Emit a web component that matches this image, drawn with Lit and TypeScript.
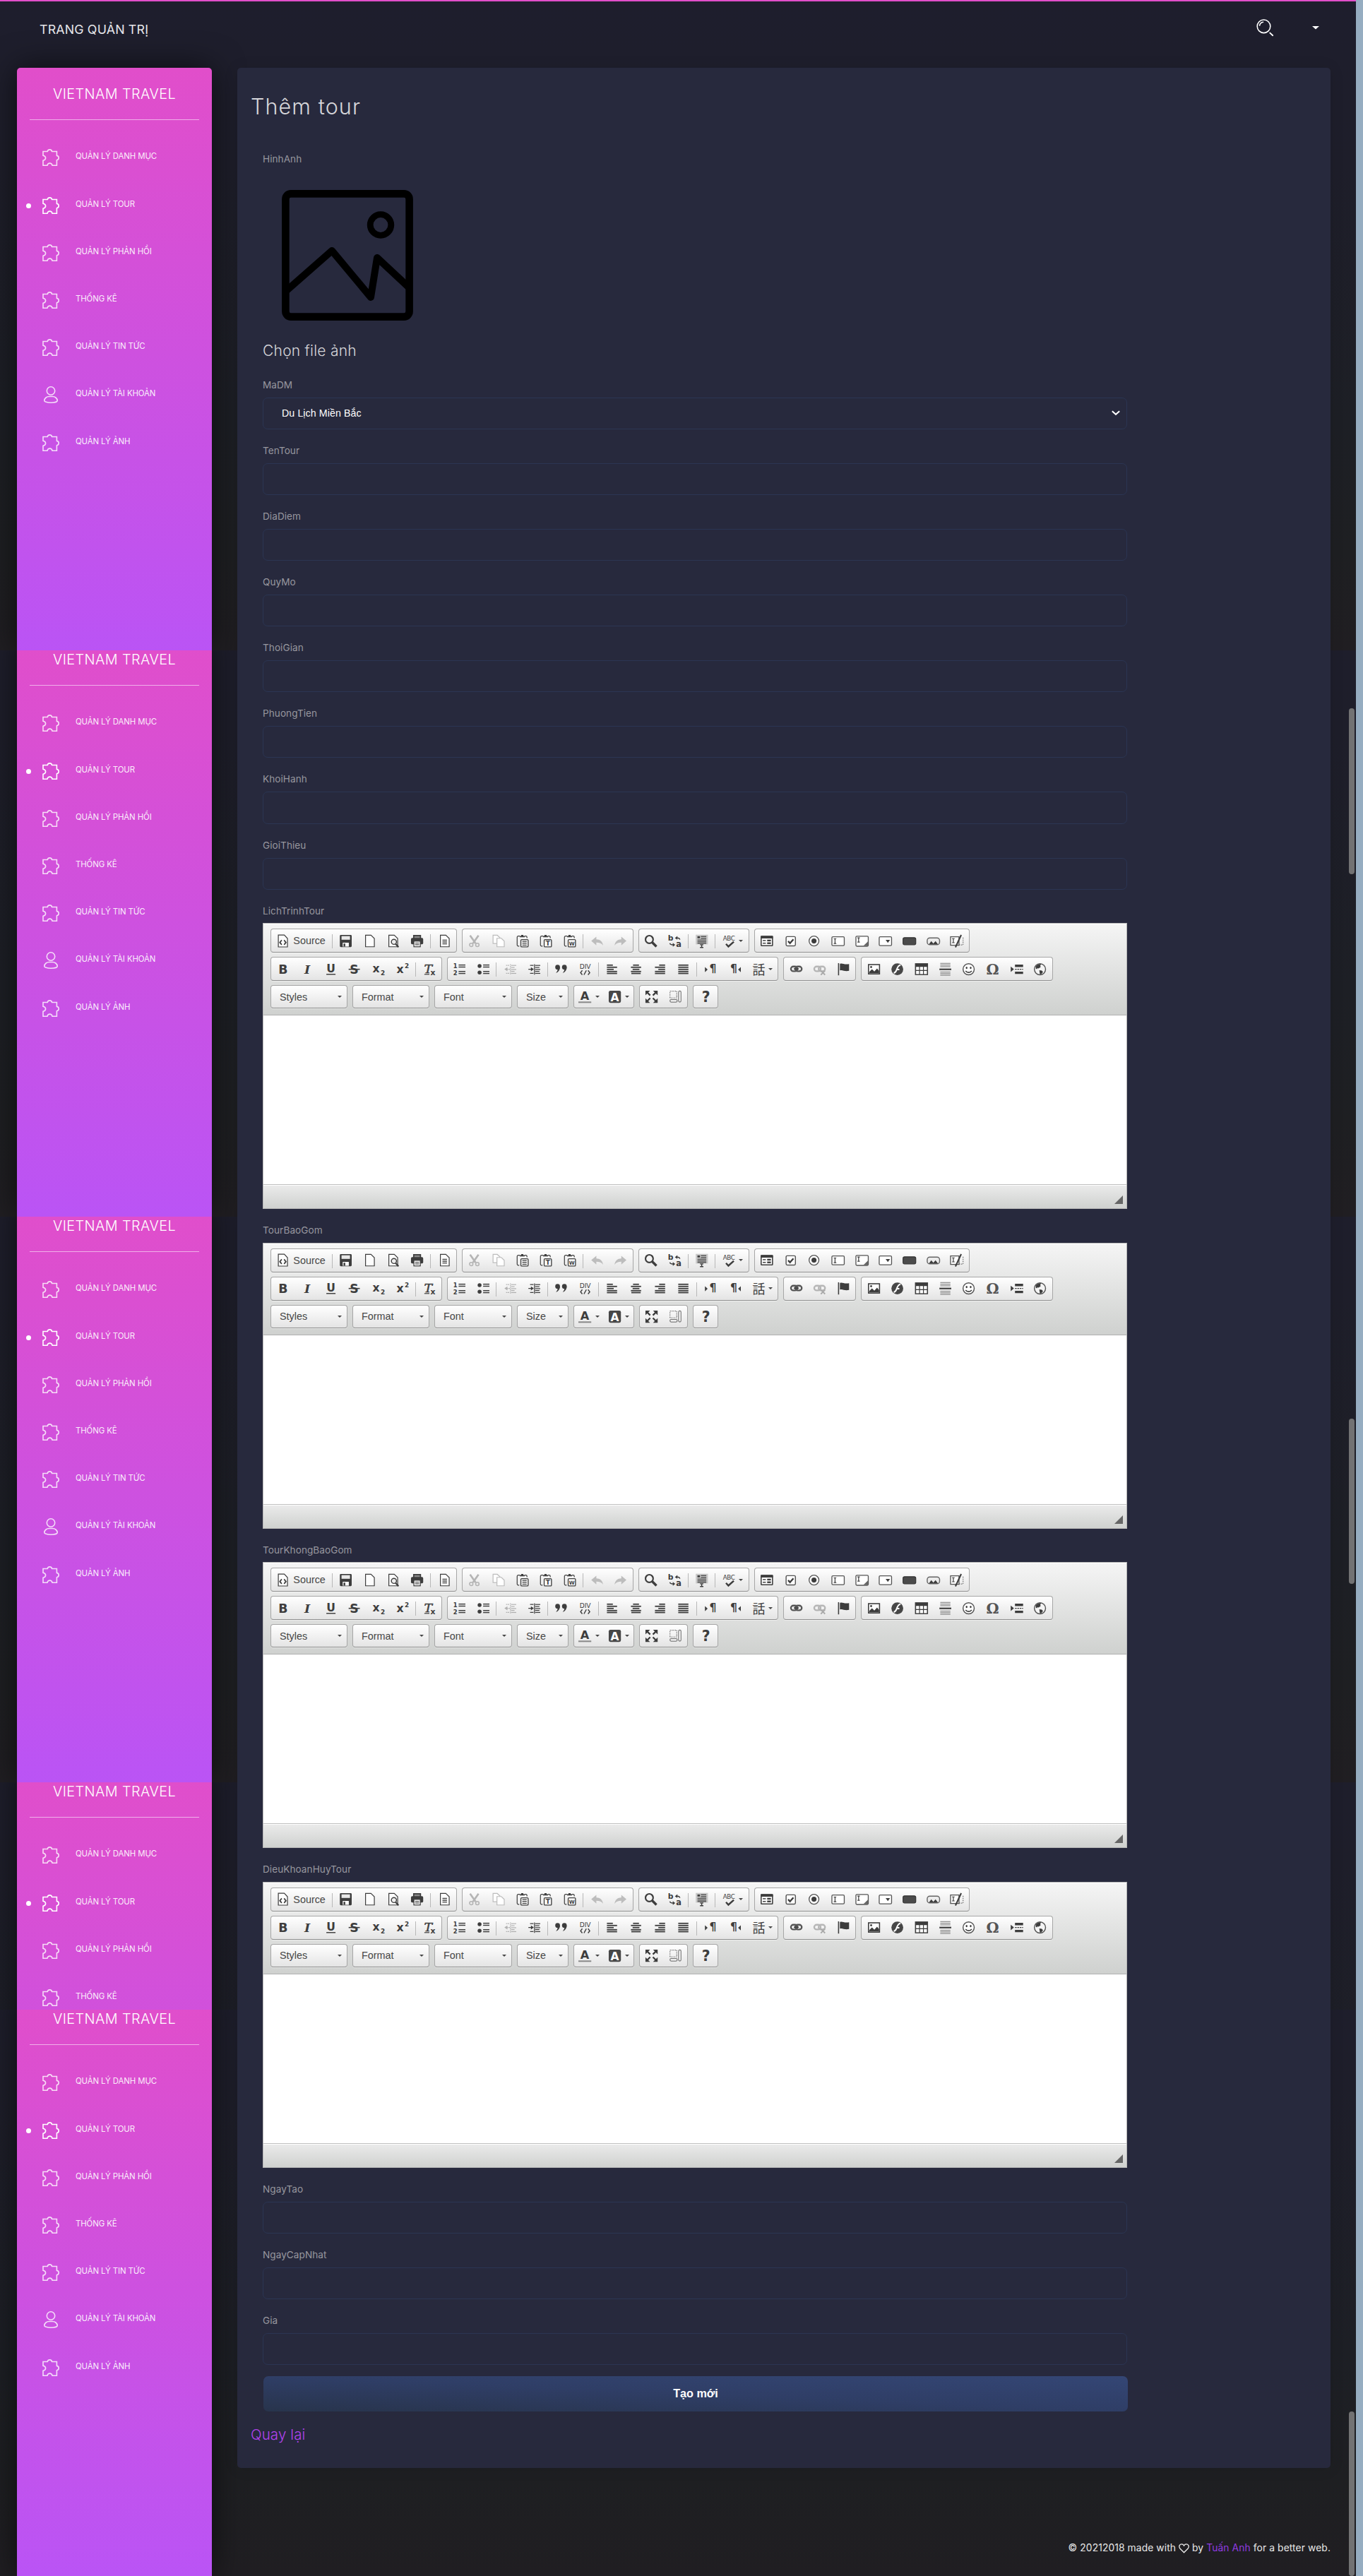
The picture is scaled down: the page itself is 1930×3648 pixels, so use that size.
import { LitElement, html, svg, css, nothing } from "lit";
import { customElement, property } from "lit/decorators.js";

const D = "#3d3d3d";

const glyph = (ch: string, x: number, y: number, size: number, extra = "", fill = D) =>
  svg`<text x=${x} y=${y} font-size=${size} fill=${fill} text-anchor="middle" font-weight="700"
    font-family="'DejaVu Sans','Liberation Sans',sans-serif" style=${extra}>${ch}</text>`;

const clipboard = (mark: unknown) => svg`
  <path d="M5 2.2H3.2a1.3 1.3 0 0 0-1.3 1.3v9.2a1.3 1.3 0 0 0 1.3 1.3H4.4M10.6 2.2h1.6a1.3 1.3 0 0 1 1.3 1.3v1" fill="none" stroke=${D} stroke-width="1"/>
  <path d="M5 3.6V2h1.6V.8h2.6V2h1.6v1.6z" fill=${D}/>
  <rect x="6.3" y="6.3" width="8.6" height="8.6" rx="1" fill="#fff" stroke=${D} stroke-width="1.1"/>${mark}`;

const lines = (rows: number[][], w = 1.5) =>
  rows.map(([x1, x2, y]) => svg`<rect x=${x1} y=${y} width=${x2 - x1} height=${w} fill=${D}/>`);

const page = svg`<path d="M3 1.2h6.4L13.4 5v9.8H3z" fill="#fdfdfd" stroke=${D} stroke-width="1"/>`;

const ICONS: Record<string, unknown> = {
  source: svg`<path d="M2.6 1h7L13.4 5v10H2.6z" fill="#fdfdfd" stroke=${D} stroke-width="1"/><path d="M6.6 7 4.4 9.7l2.2 2.7M9.4 7l2.2 2.7-2.2 2.7" fill="none" stroke=${D} stroke-width="1.4"/>`,
  save: svg`<path d="M2.2.8h11.6a1.2 1.2 0 0 1 1.2 1.2v12a1.2 1.2 0 0 1-1.2 1.2H2.2A1.2 1.2 0 0 1 1 14V2A1.2 1.2 0 0 1 2.2.8z" fill=${D}/><rect x="3" y="2.2" width="10" height="4.3" fill="#e8e8e8"/><rect x="4.4" y="10" width="7.2" height="4.6" fill="#fff"/><rect x="5.4" y="11" width="2" height="3.6" fill=${D}/>`,
  newpage: page,
  preview: svg`${page}<circle cx="9" cy="9" r="3" fill="#eee" stroke=${D} stroke-width="1.2"/><path d="m11 11.4 3.4 3.8" stroke=${D} stroke-width="1.8"/>`,
  print: svg`<path d="M4 5V1.6h8V5" fill="#888" stroke=${D} stroke-width="1.4"/><rect x=".8" y="4.4" width="14.4" height="7.4" rx="1.4" fill=${D}/><rect x="4.2" y="8.2" width="7.6" height="6.6" fill="#fff" stroke=${D}/><path d="M5.6 10.4h4.8M5.6 12.4h4.8" stroke=${D} stroke-width=".9"/>`,
  templates: svg`${page}<path d="M5.4 7h5.4M5.4 9.2h5.4M5.4 11.4h5.4" stroke=${D} stroke-width="1.1"/>`,
  cut: svg`<path d="m3 1.4 6.6 9.4M13 1.4 6.4 10.8" stroke="#b5b5b5" stroke-width="2.2"/><circle cx="4.4" cy="12.6" r="2" fill="none" stroke="#b5b5b5" stroke-width="1.3"/><circle cx="11.6" cy="12.6" r="2" fill="none" stroke="#b5b5b5" stroke-width="1.3"/>`,
  copy: svg`<path d="M1.8 1.2h5L10 4.2V11H1.8z" fill="#fff" stroke="#bcbcbc"/><path d="M6.4 4.8h5.2l3.4 3.4v6.6H6.4z" fill="#fff" stroke="#bcbcbc"/>`,
  paste: clipboard(svg`<path d="M8 8.4h5.2M8 10.6h5.2M8 12.8h5.2" stroke=${D} stroke-width="1.1"/>`),
  pastetext: clipboard(glyph("T", 10.6, 13.6, 7.5)),
  pasteword: clipboard(glyph("W", 10.6, 13.2, 6)),
  undo: svg`<path d="M7 3v3c4.4 0 7.4 2.4 8 7.4C13.3 10.8 10.8 9.9 7 9.9v3.2L1 8z" fill="#bdbdbd"/>`,
  redo: svg`<path d="M9 3v3C4.6 6 1.6 8.4 1 13.4 2.7 10.8 5.2 9.9 9 9.9v3.2L15 8z" fill="#bdbdbd"/>`,
  find: svg`<circle cx="6.2" cy="6.2" r="4.5" fill="#f4f4f4" stroke=${D} stroke-width="1.8"/><path d="m9.6 9.6 5 5" stroke=${D} stroke-width="2.8"/>`,
  replace: svg`${glyph("b", 3, 7.4, 9)}${glyph("a", 12.6, 15.4, 9.5)}<path d="M14 6.4C13.6 4.8 12 4.2 10.2 4.4M2 10.6c.6 1.6 1.8 2 4 1.9" fill="none" stroke=${D} stroke-width="1.1"/><path d="M11 2 8 4.5l3 2zM5.6 10.2 8.4 12.6l-2.8 2.2z" fill=${D}/>`,
  selectall: svg`<rect x="1" y=".6" width="14.4" height="11.4" fill="#c9c9c9"/><rect x="3" y="2.4" width="3" height="2.4" fill=${D}/>${lines([[7, 13.4, 2.2], [7, 13.4, 4.4], [3, 13.4, 6.4], [3, 13.4, 8.4], [3, 13.4, 10.2]], 1)}<path d="M6 12.4h4M6 15.6h4M8 12.4v3.2" stroke=${D} stroke-width="1.2"/>`,
  spell: svg`${glyph("ABC", 7.6, 7.6, 7.2, "letter-spacing:-.2px;font-weight:400")}<path d="m4.2 11.4 2.8 3.2 6.4-5.8" fill="none" stroke=${D} stroke-width="2"/>`,
  form: svg`<rect x="1.5" y="2.5" width="13.4" height="11" rx=".6" fill="#fff" stroke=${D} stroke-width="1.3"/><rect x="1" y="2" width="14.4" height="3" fill=${D}/>${lines([[3.4, 7, 6.8], [3.4, 7, 10]], 1.2)}${lines([[8.6, 13, 6.4], [8.6, 13, 9.6]], 2)}`,
  checkbox: svg`<rect x="2.6" y="2.8" width="11" height="11" rx="1.4" fill="#fff" stroke="#555" stroke-width="1.2"/><path d="m5 8.2 2.2 2.4 4-4.6" fill="none" stroke=${D} stroke-width="2"/>`,
  radio: svg`<circle cx="8" cy="8" r="5.8" fill="#fff" stroke="#555" stroke-width="1.1"/><circle cx="8" cy="8" r="3" fill=${D}/>`,
  textfield: svg`<rect x=".8" y="3" width="14.6" height="10.4" rx="1.2" fill="#fff" stroke="#555" stroke-width="1.1"/><path d="M3 5.4h3M3 11h3M4.5 5.4V11" stroke=${D} stroke-width="1"/>`,
  textarea: svg`<rect x=".8" y="2.4" width="14.6" height="11.8" rx="1.2" fill="#fff" stroke="#555" stroke-width="1.1"/><path d="M2.6 4.2h2.8M2.6 9.2h2.8M4 4.2v5" stroke=${D} stroke-width="1"/><path d="M15 8.6V13.800H9.6z" fill="#666"/>`,
  select: svg`<rect x=".8" y="3" width="14.6" height="10.4" rx="1.2" fill="#fff" stroke="#555" stroke-width="1.1"/><path d="M8.4 6.6h5.2L11 10.2z" fill=${D}/>`,
  button: svg`<rect x=".6" y="4" width="15" height="8.4" rx="1.8" fill="#4b4b4b" stroke="#333"/>`,
  imagebutton: svg`<rect x=".8" y="4.4" width="14.6" height="8" rx="3" fill="#ececec" stroke="#666" stroke-width="1.2"/><path d="m2.6 12 3-3.8L8 11l2.6-2.8 3 3.8z" fill=${D}/>`,
  hidden: svg`<rect x=".8" y="3" width="10" height="10" fill="#fff" stroke="#555" stroke-width="1.1"/><path d="M11 12.6h4.6V3" fill="none" stroke="#666" stroke-dasharray="1.2 1.2"/><path d="M2.6 5.2h3M2.6 10h3M4.1 5.2V10" stroke=${D} stroke-width="1"/><path d="M13.4.8 6.6 15.4" stroke=${D} stroke-width="1.7"/>`,
  bold: glyph("B", 8.3, 13.2, 14.5),
  italic: glyph("I", 8.4, 13.2, 14.5, "font-style:italic;font-family:'DejaVu Serif',serif"),
  underline: svg`${glyph("U", 8, 11.4, 13)}<rect x="2.6" y="13.4" width="10.8" height="1.2" fill=${D}/>`,
  strike: svg`${glyph("S", 8, 13.2, 14.5)}<rect x="1.4" y="7.4" width="13.2" height="1.3" fill=${D}/>`,
  sub: svg`${glyph("x", 5.4, 12, 13)}${glyph("2", 13.4, 15.2, 7.4)}`,
  sup: svg`${glyph("x", 5.4, 12.6, 13)}${glyph("2", 13.4, 7, 7.4)}`,
  removeformat: svg`${glyph("T", 7, 12.6, 14.5, "font-style:italic;font-weight:400;font-family:'DejaVu Serif',serif;stroke:#3d3d3d;stroke-width:.4")}${glyph("x", 12.4, 15.4, 9)}<path d="M2.4 14h6" stroke=${D}/>`,
  numbered: svg`${glyph("1", 3, 6.6, 7)}${glyph("2", 3, 14.6, 7)}${lines([[7, 15, 2.4], [7, 15, 4.8], [7, 15, 10], [7, 15, 12.4]], 1.2)}`,
  bulleted: svg`<circle cx="3.4" cy="4.2" r="2.3" fill=${D}/><circle cx="3.4" cy="11.8" r="2.3" fill=${D}/>${lines([[7.6, 15, 2.4], [7.6, 15, 4.8], [7.6, 15, 10], [7.6, 15, 12.4]], 1.2)}`,
  outdent: svg`<g opacity=".35">${lines([[9, 15, 3], [9, 13, 5.4], [9, 15, 7.8], [9, 13, 10], [9, 15, 12.4]], 1)}<path d="M3 3.4h4M3 12.8h4M4 8h3.6M8.2 2v12.4" stroke=${D} stroke-width="1" stroke-dasharray="1.5 .6"/><path d="M4.6 5.6v4.8L1 8z" fill=${D}/></g>`,
  indent: svg`${lines([[9, 15, 3], [9, 14, 5.4], [9, 15, 7.8], [9, 14, 10], [9, 15, 12.4]], 1)}<path d="M3 3.4h4M3 12.8h4M1 8h3.6M8.2 2v12.4" stroke=${D} stroke-width="1"/><path d="M4 5.6v4.8L7.4 8z" fill=${D}/>`,
  quote: svg`<g fill=${D}><circle cx="3.8" cy="5.6" r="2.8"/><path d="M6.6 5.6c0 3.4-1.6 5.6-4.8 7 1.6-2 2.2-3.4 2-5.2z"/><circle cx="11.8" cy="5.6" r="2.8"/><path d="M14.6 5.6c0 3.4-1.6 5.6-4.8 7 1.6-2 2.2-3.4 2-5.2z"/></g>`,
  div: svg`${glyph("DIV", 8, 7.2, 7.6, "font-weight:400")}<path d="M4.6 9.4 2.6 12l2 2.6M11.4 9.4l2 2.6-2 2.6M9.4 9.4l-2.8 5.2" fill="none" stroke=${D} stroke-width="1.2"/>`,
  left: lines([[2, 9, 2.4], [2, 14, 4.9], [2, 10, 7.4], [2, 14, 9.9], [2, 14, 12.2]]),
  center: lines([[4.5, 11.5, 2.4], [2, 14, 4.9], [4, 12, 7.4], [2, 14, 9.9], [2.5, 13.5, 12.2]]),
  right: lines([[7, 14, 2.4], [2, 14, 4.9], [6, 14, 7.4], [2, 14, 9.9], [2, 14, 12.2]]),
  justify: lines([[2, 14, 2.4], [2, 14, 4.9], [2, 14, 7.4], [2, 14, 9.9], [2, 14, 12.2]]),
  ltr: svg`<path d="M1 5.4 4.2 8.4 1 11.4z" fill=${D}/>${glyph("¶", 10.4, 12, 13)}`,
  rtl: svg`<path d="M15 5.4 11.8 8.4l3.2 3z" fill=${D}/>${glyph("¶", 6.6, 12, 13)}`,
  lang: svg`<text x="8" y="13.8" font-size="15" fill=${D} text-anchor="middle" font-family="'Noto Sans CJK JP',sans-serif">話</text>`,
  link: svg`<g fill="none" stroke="#555" stroke-width="1.9"><rect x="1.6" y="4.8" width="7.6" height="5.6" rx="2.8"/><rect x="6.8" y="4.8" width="7.6" height="5.6" rx="2.8"/></g><path d="M5 7.6h6" stroke=${D} stroke-width="1.3"/>`,
  unlink: svg`<g opacity=".38"><g fill="none" stroke="#555" stroke-width="1.9"><rect x="1.6" y="4.8" width="7.6" height="5.6" rx="2.8"/><rect x="6.8" y="4.8" width="7.6" height="5.6" rx="2.8"/></g><path d="m9.4 9.6 5 5m0-5-5 5" stroke=${D} stroke-width="1.5"/></g>`,
  flag: svg`<path d="M2 .8v14.4" stroke=${D} stroke-width="1.3"/><path d="M3.6 1.6c3-1.4 4.6 1.4 10.8.2v8c-5.4 1.4-7.6-1.6-10.8-.4z" fill=${D}/>`,
  image: svg`<rect x="1.5" y="2.5" width="13" height="11" fill="#fff" stroke=${D} stroke-width="1.3"/><circle cx="4.6" cy="5.4" r="1.2" fill=${D}/><path d="M2.4 12.8V11L5.6 8l2.8 2.6L11.6 7 14 10v2.8z" fill=${D}/>`,
  flash: svg`<circle cx="8" cy="8" r="7" fill="#474747"/><path d="M11.8 3.2C8 3.6 8 7.4 6.8 9.6 6 11.4 5.2 12.2 3.8 12.4M6.6 8.4h3.8" fill="none" stroke="#fff" stroke-width="1.7"/>`,
  table: svg`<rect x=".5" y=".9" width="15.4" height="14" fill=${D}/>${[0, 1, 2].map((c) => [0, 1].map((r) => svg`<rect x=${1.8 + c * 4.6} y=${5.2 + r * 4.8} width="3.6" height="3.7" fill="#fff"/>`))}`,
  hr: svg`${[0.6, 2.5, 4.4, 10.8, 12.7, 14.6].map((y) => svg`<rect x="2" y=${y} width="12" height="1" fill="#8a8a8a"/>`)}<rect x="1" y="7.2" width="14" height="1.8" fill=${D}/>`,
  smiley: svg`<circle cx="8" cy="8" r="6.6" fill="#fff" stroke="#555" stroke-width="1.2"/><ellipse cx="5.6" cy="6.3" rx="1" ry="1.4" fill=${D}/><ellipse cx="10.4" cy="6.3" rx="1" ry="1.4" fill=${D}/><path d="M4.4 10c1.8 2.4 5.4 2.4 7.2 0" fill="none" stroke=${D} stroke-width="1.3"/>`,
  omega: glyph("Ω", 8, 14, 17, "font-family:'DejaVu Serif',serif", "#555"),
  pagebreak: svg`<path d="M1 4.8 4.8 8 1 11.2z" fill=${D}/><path d="M6 4h9.6M6 12.2h9.6" stroke=${D} stroke-width="2.8"/><path d="M6 8.1h9.6" stroke=${D} stroke-width="1" stroke-dasharray="2 .8"/>`,
  iframe: svg`<circle cx="8" cy="8" r="6.6" fill="#f4f4f4" stroke="#555" stroke-width="1.2"/><path d="M3 4.6C5 2 8 1.4 9.4 2L8.2 4 9 5.2 6.4 7 5 6.6 4.4 8 3 7zM7.2 9.2l3 .4 1.4 1.6-2 2.6-1.6.4-.4-2.4z" fill=${D}/>`,
  color: svg`${glyph("A", 7.6, 11.6, 13.5)}<rect y="13.6" width="15.2" height="1.7" fill="#8a8a8a"/>`,
  bgcolor: svg`<rect x=".8" y=".8" width="14.4" height="14.4" rx="2" fill="#474747"/>${glyph("A", 8, 13, 13, "", "#fff")}`,
  maximize: svg`<g fill=${D}><path d="M.8.8h5.4L.8 6.2zM15.2.8v5.4L9.8.8zM.8 15.2V9.8l5.4 5.4zM15.2 15.2H9.8l5.4-5.4z"/></g><path d="m2 2 4.4 4.4M14 2 9.6 6.4M2 14l4.4-4.4M14 14 9.6 9.6" stroke=${D} stroke-width="1.9"/>`,
  blocks: svg`<path d="M1.4 1.4h8v8h-8z" fill="none" stroke="#666" stroke-dasharray="1 1"/><rect x="11.6" y="1.2" width="2.8" height="13" rx="1.4" fill="#fff" stroke="#777"/><rect x="1.4" y="11.4" width="8.6" height="2.8" rx="1.4" fill="#fff" stroke="#777"/>`,
  about: glyph("?", 8, 14, 17),
};

@customElement("ck-editor")
class CkEditor extends LitElement {
  static styles = css`
    :host { display: block; box-sizing: border-box; height: 405px; border: 1px solid #b6b6b6;
      font-family: "Liberation Sans", Arial, sans-serif; }
    .editor { display: flex; flex-direction: column; height: 100%; }
    .toolbar { box-sizing: border-box; height: 130px; border-bottom: 1px solid #b0b0b0; padding: 7px 0 0 10px;
      background: linear-gradient(#f5f5f5, #cfd1cf); box-shadow: inset 0 1px 0 #fff; display: flex; flex-direction: column; gap: 6px; }
    .row { display: flex; gap: 7px; height: 34px; }
    .group { box-sizing: border-box; display: flex; height: 34px; border: 1px solid #a6a6a6; border-bottom-color: #8f8f8f; border-radius: 4px;
      background: linear-gradient(#fff, #e4e4e4); box-shadow: 0 1px 0 rgba(255, 255, 255, .5); }
    .row.third .group { height: 33px; }
    .btn { width: 33.7px; display: flex; align-items: center; justify-content: center; }
    .btn.drop { width: 44.3px; }
    .btn.color { width: 42px; }
    .btn.about { width: 34px; }
    .btn.source { width: 84px; gap: 5px; }
    .label { font-size: 14.4px; color: #474747; }
    .sep { width: 1px; margin: 7px 2.3px 5px 1.5px; background: #b8b8b8; }
    .icon { width: 19.2px; height: 19.2px; flex: none; display: block; overflow: visible; }
    .caret { width: 0; height: 0; border: 3.6px solid transparent; border-top-color: #474747; border-bottom: 0; }
    .btn .caret { margin: 0 0 0 4px; border-width: 3px; border-bottom: 0; border-top-width: 3.6px; }
    .combo { justify-content: space-between; align-items: center; padding: 0 7px 0 12px; }
    .body { flex: 1; background: #fff; }
    .foot { box-sizing: border-box; height: 34px; border-top: 1px solid #bfbfbf; background: linear-gradient(#ebebeb, #cfd1cf);
      box-shadow: inset 0 1px 0 #fff; display: flex; justify-content: flex-end; align-items: flex-end; padding: 0 5px 6px; }
    .grip { width: 0; height: 0; border-left: 12px solid transparent; border-bottom: 12px solid #666; }
  `;

  private btn(name: string) {
    if (name === "|") return html`<span class="sep"></span>`;
    const [id, kind = ""] = name.split(":");
    return html`<span class="btn ${kind}">
      <svg class="icon" viewBox="0 0 16 16">${ICONS[id]}</svg>
      ${id === "source" ? html`<span class="label">Source</span>` : nothing}
      ${kind === "drop" || kind === "color" ? html`<i class="caret"></i>` : nothing}
    </span>`;
  }

  private group(names: string) {
    return html`<div class="group">${names.split(" ").map((n) => this.btn(n))}</div>`;
  }

  private combo(label: string, width: number) {
    return html`<div class="group combo" style="width:${width}px"><span class="label">${label}</span><i class="caret"></i></div>`;
  }

  render() {
    return html`<div class="editor">
      <div class="toolbar">
        <div class="row">
          ${this.group("source:source | save newpage preview print | templates")}
          ${this.group("cut copy paste pastetext pasteword | undo redo")}
          ${this.group("find replace | selectall | spell:drop")}
          ${this.group("form checkbox radio textfield textarea select button imagebutton hidden")}
        </div>
        <div class="row">
          ${this.group("bold italic underline strike sub sup | removeformat")}
          ${this.group("numbered bulleted | outdent indent | quote div | left center right justify | ltr rtl lang:drop")}
          ${this.group("link unlink flag")}
          ${this.group("image flash table hr smiley omega pagebreak iframe")}
        </div>
        <div class="row third">
          ${this.combo("Styles", 109)} ${this.combo("Format", 109)} ${this.combo("Font", 110)} ${this.combo("Size", 73)}
          ${this.group("color:color bgcolor:color")} ${this.group("maximize blocks")} ${this.group("about:about")}
        </div>
      </div>
      <div class="body"></div>
      <div class="foot"><i class="grip"></i></div>
    </div>`;
  }
}

const NAV = [
  ["QUẢN LÝ DANH MỤC", 68], ["QUẢN LÝ TOUR", 67], ["QUẢN LÝ PHẢN HỒI", 67], ["THỐNG KÊ", 67],
  ["QUẢN LÝ TIN TỨC", 67], ["QUẢN LÝ TÀI KHOẢN", 67.5], ["QUẢN LÝ ẢNH", 67],
] as const;

@customElement("side-nav")
class SideNav extends LitElement {
  @property({ type: Number }) count = NAV.length;

  static styles = css`
    :host { display: block; box-sizing: border-box; width: 276px; height: 826px; border-radius: 5px 5px 0 0; color: #fff;
      background: linear-gradient(0deg, #ba54f5 0%, #e14eca 100%); font-family: Inter, "Open Sans", sans-serif;
      box-shadow: 0 0 45px 0 rgba(0, 0, 0, .6); }
    .brand { box-sizing: border-box; height: 74px; margin: 0 18px; padding-top: 24px; border-bottom: 1px solid rgba(255, 255, 255, .55);
      text-align: center; font-size: 19.8px; font-weight: 300; line-height: 26px; letter-spacing: .44px; }
    .list { padding: 19px 0 0 9px; }
    .item { display: flex; align-items: flex-start; }
    .dot { width: 7px; height: 7px; border-radius: 50%; margin: 31px 16px 0 4px; }
    .on .dot { background: #fff; }
    .icon { width: 24px; height: 24px; margin-top: 22px; overflow: visible; opacity: .8; fill: none; stroke: #fff; stroke-width: 1.6; }
    .on .icon { opacity: 1; }
    .text { margin: 24px 0 0 23px; font-size: 11.4px; line-height: 16px; letter-spacing: -.1px; opacity: .9; white-space: nowrap; }
  `;
  render() {
    return html`<div class="brand">VIETNAM TRAVEL</div>
      <div class="list">${NAV.slice(0, this.count).map(([t, h], i) => html`<div class="item ${i === 1 ? "on" : ""}" style="height:${h}px">
        <i class="dot"></i>
        <svg class="icon" viewBox="0 0 24 24">${i === 5
          ? svg`<circle cx="12" cy="6.5" r="5.7"/><path d="M2.8 20.5c0-4 4-6 6.5-6h5.4c2.5 0 6.5 2 6.5 6 0 1.2-3.5 2.7-9.2 2.7s-9.2-1.5-9.2-2.7z"/>`
          : svg`<path d="M1 3.5H7.2C7.6 1.8 8.7.9 10.4.9s2.8.9 3.2 2.6h6.8V9.4c1.7.3 2.8 1.5 2.8 3.2s-1.1 2.9-2.8 3.2v7.4H14c-.4-1.9-1.6-3.1-3.5-3.1S7.4 21.3 7 23.2H1V16.3c1.9-.4 3.6-1.6 3.6-3.5S2.9 9.7 1 9.3z"/>`}</svg>
        <span class="text">${t}</span></div>`)}</div>`;
  }
}

/* Each frame is one viewport-high slice of the fixed sidebar: [height, visible menu items]. */
const FRAMES = [[921, 7], [802, 7], [801, 7], [322, 4], [802, 7]];

@customElement("app-root")
class AppRoot extends LitElement {
  static styles = css`
    :host { display: block; font-family: Inter, "Open Sans", sans-serif; }
    .page { display: grid; grid-template-columns: 1920px 10px; height: 3648px; overflow: hidden; }
    .strip { background: #96adc1; }
    .shell { display: grid; height: 3648px; position: relative; }
    .frames, .content { grid-area: 1 / 1; }
    .frame { overflow: hidden; }
    .view { height: 922px; box-sizing: border-box; padding: 96px 0 0 24px;
      background: linear-gradient(#1e1e2d 0, #1e1e2a 25%, #1d1f25 65%, #1e1f22 85%, #201e22 100%); }
    .frame + .frame .view { margin-top: -120px; }
    .content { position: relative; display: flex; flex-direction: column; border-top: 2px solid #e14eca; }
    .top { height: 94px; box-sizing: border-box; padding: 0 52px 0 56px; display: flex; justify-content: space-between; color: #e6e6ea; }
    .home { padding-top: 28px; font-size: 17.8px; line-height: 24px; letter-spacing: .17px; }
    .tools { display: flex; gap: 54px; padding-top: 25px; }
    .tools svg { display: block; }
    .card { box-sizing: border-box; width: 1548px; height: 3399px; margin-left: 336px; border-radius: 5px; background: #27293d;
      padding: 0 19px; box-shadow: 0 1px 20px 0 rgba(0, 0, 0, .1); color: #d6d6da; }
    .title { height: 99px; padding-top: 35px; box-sizing: border-box; font-size: 30.5px; line-height: 40px; font-weight: 300; letter-spacing: 1.1px; }
    .form { width: 1224px; margin-left: 17px; }
    .label { box-sizing: border-box; height: 48px; padding-top: 21px; font-size: 13.6px; line-height: 18px; letter-spacing: .05px; color: #97979f; }
    .picture { height: 271.5px; box-sizing: border-box; padding-top: 26px; }
    .picture svg { display: block; margin-left: 27px; }
    .file { font-size: 21px; line-height: 28px; font-weight: 300; margin-top: 29px; letter-spacing: .24px; }
    .field { box-sizing: border-box; height: 45.1px; border: 1px solid #2b3553; border-radius: 7px; }
    .select { display: flex; align-items: center; justify-content: space-between; padding: 0 9px 0 26px; height: 45.5px;
      font: 14.2px "Liberation Sans", Arial, sans-serif; letter-spacing: .1px; color: #fff; }
    .short .label { height: 47.5px; }
    .submit { display: flex; align-items: center; justify-content: center; height: 50px; margin: 16px -1px 0 1px; border-radius: 7px; color: #fff;
      font: 700 16.2px "Liberation Sans", Arial, sans-serif; background: linear-gradient(to top right, #28344c, #2f3e66 50%, #344675); }
    .back { margin-top: 19px; font-size: 20.5px; line-height: 28px; font-weight: 300; letter-spacing: .12px; color: #b043ec; }
    .footer { display: flex; justify-content: flex-end; align-items: center; padding: 103px 36px 0 0; line-height: 20px; font-size: 13.8px;
      letter-spacing: .11px; color: #e8e8e8; white-space: pre; }
    .footer svg { margin-top: 2px; }
    .author { color: #8f3be0; }
    .thumb { position: absolute; right: 2px; width: 8px; border-radius: 4px; background: #727273; }
    .t1 { top: 1003px; height: 235px; }
    .t2 { top: 2009px; height: 234px; }
    .t3 { top: 3415px; height: 233px; }
  `;

  private input(label: string) {
    return html`<div class="label">${label}</div><div class="field"></div>`;
  }

  render() {
    return html`<div class="page">
      <div class="shell">
        <div class="frames">${FRAMES.map(([h, n]) => html`<div class="frame" style="height:${h}px"><div class="view"><side-nav .count=${n}></side-nav></div></div>`)}</div>
        <div class="content">
          <div class="top">
            <div class="home">TRANG QUẢN TRỊ</div>
            <div class="tools">
              <svg width="25" height="25" viewBox="0 0 25 25" fill="none" stroke="#fff" stroke-linecap="round"><circle cx="10.5" cy="10.3" r="9.3" stroke-width="1.6"/><path d="M4.6 9c.6-2.8 2.4-4.4 5-4.8" stroke-width="1.6"/><path d="m19.3 19.6 3.9 3.6" stroke-width="1.9"/></svg>
              <svg width="10" height="20" viewBox="0 0 10 20"><path d="M0 10h10L5 14.5z" fill="#fff"/></svg>
            </div>
          </div>
          <div class="card">
            <div class="title">Thêm tour</div>
            <div class="form">
              <div class="label">HinhAnh</div>
              <div class="picture">
                <svg width="186" height="185" viewBox="0 0 186 185" fill="none" stroke="#000" stroke-linejoin="round"><rect x="5.4" y="5.4" width="175.2" height="174.2" rx="7.5" stroke-width="10.6"/><circle cx="140" cy="49.5" r="14.8" stroke-width="8.8"/><path d="M5 144 71 86l55 66 9-56 45 42" stroke-width="10"/></svg>
                <div class="file">Chọn file ảnh</div>
              </div>
              <div class="label">MaDM</div>
              <div class="field select"><span>Du Lịch Miền Bắc</span><svg width="12" height="8" viewBox="0 0 12 8"><path d="M.8 1.2 6 5.8l5.2-4.6" fill="none" stroke="#fff" stroke-width="2"/></svg></div>
              ${["TenTour", "DiaDiem", "QuyMo", "ThoiGian", "PhuongTien", "KhoiHanh", "GioiThieu"].map((l) => this.input(l))}
              ${["LichTrinhTour", "TourBaoGom", "TourKhongBaoGom", "DieuKhoanHuyTour"].map((l) => html`<div class="short"><div class="label">${l}</div><ck-editor></ck-editor></div>`)}
              ${["NgayTao", "NgayCapNhat", "Gia"].map((l) => this.input(l))}
              <div class="submit">Tạo mới</div>
            </div>
            <div class="back">Quay lại</div>
          </div>
          <div class="footer"><span>© 20212018 made with </span><svg width="15" height="14" viewBox="0 0 15 14"><path d="M7.5 12.8 1.8 7C-.6 3.6 1.8.9 4.2.9 5.8.9 7 2 7.5 3 8 2 9.2.9 10.8.9c2.4 0 4.8 2.7 2.4 6.1z" fill="none" stroke="#eee" stroke-width="1.3"/></svg><span> by </span><span class="author">Tuấn Anh</span><span> for a better web.</span></div>
        </div>
        <i class="thumb t1"></i><i class="thumb t2"></i><i class="thumb t3"></i>
      </div>
      <div class="strip"></div>
    </div>`;
  }
}
